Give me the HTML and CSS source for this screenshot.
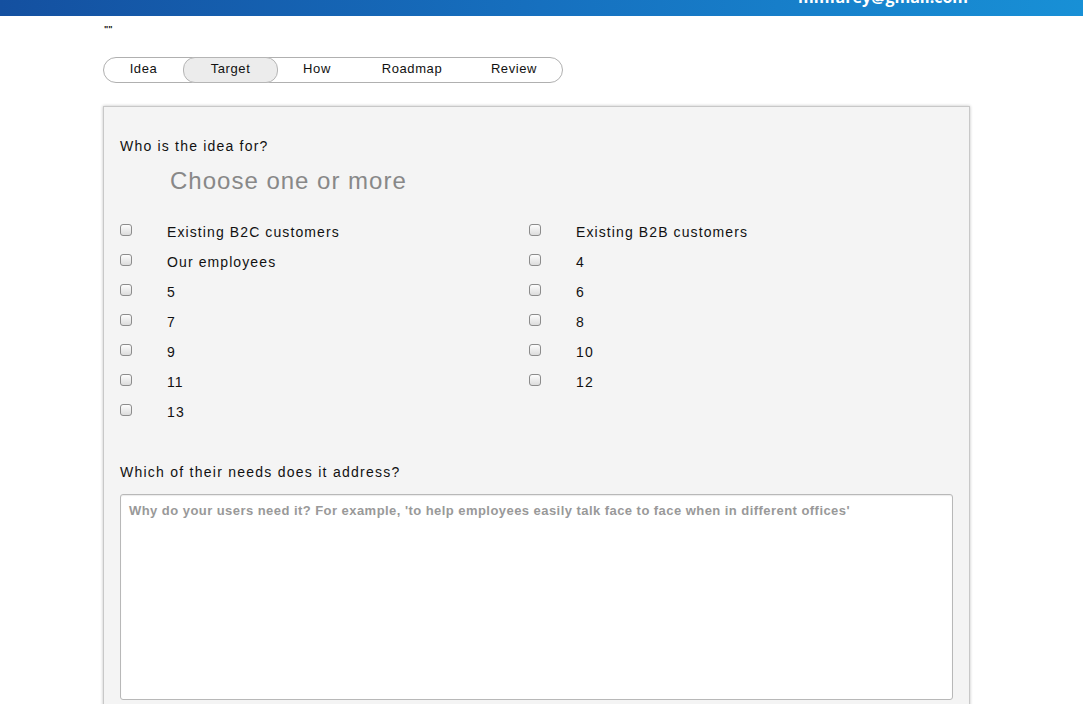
FILE: index.html
```html
<!DOCTYPE html>
<html>
<head>
<meta charset="utf-8">
<link rel="stylesheet" href="styles.css">
</head>
<body>
<header class="topbar">
  <span class="email">mmfarey@gmail.com</span>
</header>
<main class="page">
  <div class="quote">""</div>
  <nav class="tabs">
    <span class="tab t-idea">Idea</span>
    <span class="tab t-target active">Target</span>
    <span class="tab t-how">How</span>
    <span class="tab t-road">Roadmap</span>
    <span class="tab t-review">Review</span>
  </nav>
  <section class="panel">
    <h2 class="q">Who is the idea for?</h2>
    <p class="hint">Choose one or more</p>
    <div class="opts">
      <label class="opt"><input type="checkbox"><span>Existing B2C customers</span></label>
      <label class="opt"><input type="checkbox"><span>Existing B2B customers</span></label>
      <label class="opt"><input type="checkbox"><span>Our employees</span></label>
      <label class="opt"><input type="checkbox"><span>4</span></label>
      <label class="opt"><input type="checkbox"><span>5</span></label>
      <label class="opt"><input type="checkbox"><span>6</span></label>
      <label class="opt"><input type="checkbox"><span>7</span></label>
      <label class="opt"><input type="checkbox"><span>8</span></label>
      <label class="opt"><input type="checkbox"><span>9</span></label>
      <label class="opt"><input type="checkbox"><span>10</span></label>
      <label class="opt"><input type="checkbox"><span>11</span></label>
      <label class="opt"><input type="checkbox"><span>12</span></label>
      <label class="opt"><input type="checkbox"><span>13</span></label>
    </div>
    <h2 class="q q2">Which of their needs does it address?</h2>
    <textarea class="needs" placeholder="Why do your users need it? For example, 'to help employees easily talk face to face when in different offices'"></textarea>
  </section>
</main>
</body>
</html>
```

FILE: styles.css
```css
* { box-sizing: border-box; }
html, body { margin: 0; padding: 0; background: #fff; }
body {
  font-family: "Liberation Sans", Arial, sans-serif;
  color: #111;
  overflow: hidden;
  height: 704px;
}
.topbar {
  height: 16px;
  background: linear-gradient(90deg, #1450a0 0%, #1670bf 50%, #1890d6 100%);
  overflow: hidden;
  position: relative;
}
.email {
  position: absolute;
  left: 798px;
  top: -13px;
  color: #fff;
  font-family: "Open Sans", sans-serif;
  font-weight: 700;
  font-size: 16px;
  line-height: 20px;
}
.page {
  padding-left: 103px;
  width: 970px;
}
.quote {
  font-size: 9px;
  line-height: 10px;
  margin-top: 8px;
  height: 10px;
  padding-left: 1px;
  font-weight: 700;
}
.tabs {
  margin-top: 23px;
  width: 460px;
  height: 26px;
  border: 1px solid #b0b0b0;
  border-radius: 13px;
  display: flex;
  align-items: center;
  position: relative;
  font-size: 13px;
  letter-spacing: 0.6px;
}
.tab {
  display: flex;
  align-items: center;
  justify-content: center;
  height: 24px;
  padding-bottom: 4px;
}
.t-idea { width: 79px; }
.t-target { width: 95px; }
.t-how { width: 78px; }
.t-road { width: 112px; }
.t-review { width: 92px; }
.tab.active {
  background: #ececec;
  border: 1px solid #b5b5b5;
  border-radius: 12px;
  height: 26px;
}
.panel {
  margin-top: 23px;
  width: 867px;
  background: #f4f4f4;
  border: 1px solid #c8c8c8;
  box-shadow: 0 0 3px rgba(0,0,0,0.25);
  padding: 29px 16px 20px 16px;
  height: 620px;
}
.q {
  margin: 0;
  font-size: 14px;
  font-weight: 400;
  line-height: 20px;
  letter-spacing: 1.2px;
  color: #111;
}
.hint {
  margin: 10px 0 0 50px;
  font-size: 24px;
  line-height: 30px;
  color: #888;
  letter-spacing: 1px;
}
.opts {
  margin-top: 20px;
  display: grid;
  grid-template-columns: 409px 409px;
}
.opt {
  display: flex;
  align-items: center;
  height: 30px;
  font-size: 14px;
  letter-spacing: 1.1px;
}
.opt input {
  -webkit-appearance: none;
  appearance: none;
  margin: 0 35px 0 0;
  width: 12px;
  height: 12px;
  border: 1px solid #8c8c8c;
  border-radius: 3px;
  background: linear-gradient(#fdfdfd, #dcdcdc);
  position: relative;
  top: -1px;
}
.opt span { padding-top: 1px; }
.q2 { margin-top: 36px; letter-spacing: 1.25px; }
.needs {
  display: block;
  margin-top: 12px;
  width: 833px;
  height: 206px;
  border: 1px solid #b8b8b8;
  border-radius: 3px;
  background: #fff;
  resize: none;
  padding: 8px 8px;
  font-family: "Liberation Sans", Arial, sans-serif;
  font-size: 13px;
  letter-spacing: 0.45px;
  box-shadow: inset 0 1px 1px rgba(0,0,0,0.08);
}
.needs::placeholder { color: #999; font-weight: 700; }
```
